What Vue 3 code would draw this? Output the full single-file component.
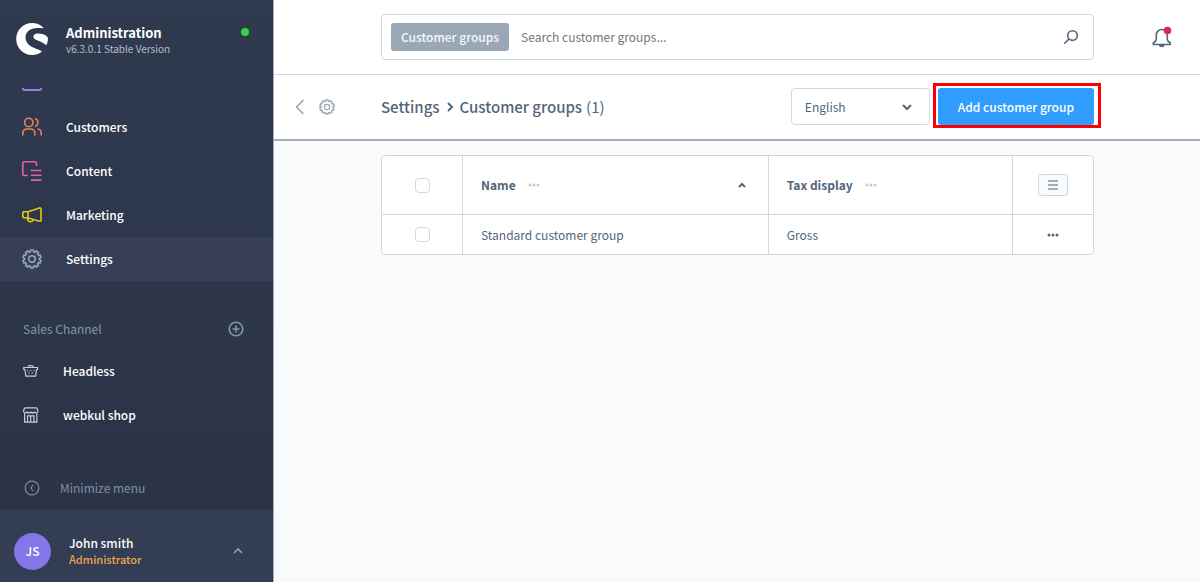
<template>
  <div class="admin">
    <aside class="sidebar">
      <header class="brand">
        <svg class="brand-logo" viewBox="0 0 32 32" aria-hidden="true">
          <path fill="#fff" d="M27 4.300C24 1.500 20.500 0 16.200 0C7.200 0 0.200 7.200 0.200 16S7.200 32 16.200 32c3.500 0 6.700-1.100 9.300-3c0.300-0.300 0.200-0.700-0.100-0.900C22.500 25.900 9.500 24.300 9.500 14.300C9.500 8.600 14.600 5.200 21 5c2.200-0.100 4.200 0.100 5.800 0.300c0.500 0 0.700-0.600 0.200-1z" />
          <path fill="#fff" d="M31.700 14.200C28.800 11.400 25.600 10.600 21.600 10.600c-2.700 0-4.200 1.300-4.200 3.100c0 3.700 7.500 3.700 12.100 8c0.500 0.500 1 0.300 1.200-0.200C31.700 19.500 32.200 16.800 31.700 14.200z" />
        </svg>
        <div class="brand-text">
          <strong>Administration</strong>
          <span>v6.3.0.1 Stable Version</span>
        </div>
        <i class="online"></i>
      </header>

      <div class="scrolled-icon">
        <svg width="20" height="4" viewBox="0 0 20 4" aria-hidden="true">
          <path d="M1 0v.5q0 1.500 1.500 1.500h15q1.500 0 1.500-1.500V0" fill="none" stroke="#9083e0" stroke-width="2" />
        </svg>
      </div>

      <nav class="menu">
        <a
          v-for="item in menu"
          :key="item.name"
          href="#"
          class="menu-item"
          :class="['menu-' + item.name, { active: item.name === 'settings' }]"
        >
          <svg class="icon" viewBox="0 0 20 20" aria-hidden="true">
            <path v-for="d in item.paths" :key="d" :d="d" />
          </svg>
          <span>{{ item.label }}</span>
        </a>
      </nav>

      <section class="channels">
        <div class="channels-head">
          <h2>Sales Channel</h2>
          <button type="button" aria-label="Add sales channel">
            <svg width="16" height="16" viewBox="0 0 16 16" aria-hidden="true">
              <circle cx="8" cy="8" r="6.800" />
              <path d="M8 4.500v7M4.500 8h7" />
            </svg>
          </button>
        </div>
        <a href="#" class="channel">
          <svg width="16" height="16" viewBox="0 0 16 16" aria-hidden="true">
            <path d="M.8 4.500h13.800v2h-1L12.600 13.200H2.900L1.800 6.500h-1zM5 4.500q.3-1.900 2-1.900h1.500q1.700 0 2 1.900" />
            <path d="M4 7.500h1.200M7.200 7.500h1.200M10.300 7.500h1.200M5.500 9.800h1.200M8.700 9.800h1.200" />
          </svg>
          <span>Headless</span>
        </a>
        <a href="#" class="channel">
          <svg width="16" height="16" viewBox="0 0 16 16" aria-hidden="true">
            <path d="M2 .8h11.500l1.200 2V5q-1.500 2-3 0q-2 2-4 0q-2 2-4 0q-1.500 2-3 0V2.800zM1.600 6.500v8.700h12.300V6.500M4.500 15V8.800h6.500V15M7.700 8.800V15" />
          </svg>
          <span>webkul shop</span>
        </a>
      </section>

      <button type="button" class="minimize">
        <svg width="16" height="16" viewBox="0 0 16 16" aria-hidden="true">
          <circle cx="8" cy="8" r="6.900" />
          <path d="M9 5L7 8l2 3" />
        </svg>
        <span>Minimize menu</span>
      </button>

      <button type="button" class="user">
        <span class="avatar">JS</span>
        <span class="user-text">
          <strong>John smith</strong>
          <em>Administrator</em>
        </span>
        <svg width="10" height="10" viewBox="0 0 10 10" aria-hidden="true">
          <path d="M1 7l4-4 4 4" />
        </svg>
      </button>
    </aside>

    <main class="page">
      <div class="topbar">
        <form class="search" @submit.prevent>
          <span class="tag">Customer groups</span>
          <input v-model="term" type="text" placeholder="Search customer groups..." aria-label="Search customer groups" />
          <button type="submit" aria-label="Search">
            <svg width="16" height="16" viewBox="0 0 16 16" aria-hidden="true">
              <circle cx="9.500" cy="6.500" r="4.800" />
              <path d="M6 10l-4.800 4.800" />
            </svg>
          </button>
        </form>
        <button type="button" class="bell" aria-label="Notifications">
          <svg width="20" height="22" viewBox="0 0 20 22" aria-hidden="true">
            <path d="M4.300 9a5.500 5.500 0 0 1 11 0v4.500q0 1.500 3 3.500v1.500H1.300V17q3-2 3-3.500z" stroke-linejoin="round" />
            <path d="M7 19h5.500a2.750 2.200 0 0 1-5.500 0z" fill="#5a6b7d" stroke="none" />
            <circle cx="15.500" cy="4.500" r="3.800" fill="#de294c" stroke="none" />
          </svg>
        </button>
      </div>

      <div class="smartbar">
        <div class="back">
          <a href="#" aria-label="Back">
            <svg width="10" height="16" viewBox="0 0 10 16" aria-hidden="true">
              <path d="M8.500 1L1.500 8l7 7" />
            </svg>
          </a>
          <svg width="16" height="16" viewBox="0 0 20 20" aria-hidden="true">
            <path v-for="d in gear" :key="d" :d="d" />
          </svg>
        </div>
        <h1>
          <a href="#">Settings</a>
          <svg width="8" height="10" viewBox="0 0 8 10" aria-hidden="true">
            <path d="M2 1l4 4-4 4" />
          </svg>
          Customer groups <small>(1)</small>
        </h1>
        <div class="language">
          <select v-model="language" aria-label="Language">
            <option>English</option>
          </select>
          <svg width="10" height="10" viewBox="0 0 10 10" aria-hidden="true">
            <path d="M1 3l4 4 4-4" />
          </svg>
        </div>
        <button type="button" class="primary">Add customer group</button>
      </div>

      <div class="content">
        <div class="card">
          <table>
            <colgroup>
              <col class="col-check" />
              <col class="col-name" />
              <col />
              <col class="col-actions" />
            </colgroup>
            <thead>
              <tr>
                <th><input type="checkbox" aria-label="Select all" /></th>
                <th>
                  <div class="head">
                    Name
                    <svg class="dots" width="12" height="4" viewBox="0 0 12 4" aria-hidden="true">
                      <path :d="dots" />
                    </svg>
                    <svg class="sort" width="8" height="8" viewBox="0 0 8 8" aria-hidden="true">
                      <path d="M1 6l3-3 3 3" />
                    </svg>
                  </div>
                </th>
                <th>
                  <div class="head">
                    Tax display
                    <svg class="dots" width="12" height="4" viewBox="0 0 12 4" aria-hidden="true">
                      <path :d="dots" />
                    </svg>
                  </div>
                </th>
                <th>
                  <button type="button" class="columns" aria-label="Table settings">
                    <svg width="12" height="12" viewBox="0 0 12 12" aria-hidden="true">
                      <path d="M1 2h10M1 6h10M1 10h10" />
                    </svg>
                  </button>
                </th>
              </tr>
            </thead>
            <tbody>
              <tr v-for="group in groups" :key="group.name">
                <td><input type="checkbox" :aria-label="`Select ${group.name}`" /></td>
                <td>{{ group.name }}</td>
                <td>{{ group.tax }}</td>
                <td>
                  <button type="button" class="more" aria-label="Actions">
                    <svg width="12" height="4" viewBox="0 0 12 4" aria-hidden="true">
                      <path :d="dots" />
                    </svg>
                  </button>
                </td>
              </tr>
            </tbody>
          </table>
        </div>
      </div>
    </main>
  </div>
</template>

<script setup>
import { ref } from 'vue'

const term = ref('')
const language = ref('English')

const dots = 'M2 2h.01M6 2h.01M10 2h.01'

// outline with ten teeth around the hub
function gearOutline() {
  const teeth = 10
  const points = []
  for (let i = 0; i < teeth; i++) {
    const base = (i / teeth) * Math.PI * 2 - Math.PI / 2
    for (const [offset, radius] of [[-0.21, 7.4], [-0.15, 9.1], [0.15, 9.1], [0.21, 7.4]]) {
      const x = 10 + radius * Math.cos(base + offset)
      const y = 10 + radius * Math.sin(base + offset)
      points.push(`${x.toFixed(2)} ${y.toFixed(2)}`)
    }
  }
  return `M${points.join('L')}Z`
}

const gear = [gearOutline(), 'M13.300 10a3.300 3.300 0 1 1-6.600 0a3.300 3.300 0 0 1 6.600 0z']

const menu = [
  {
    name: 'customers',
    label: 'Customers',
    paths: [
      'M11 5.500a4.200 4.200 0 1 1-8.400 0a4.200 4.200 0 0 1 8.400 0z',
      'M.8 18.500v-2.500a4 4 0 0 1 4-4h4a4 4 0 0 1 4 4V18.500',
      'M13 1.500a4.200 4.200 0 0 1 0 8',
      'M15.500 12a4 4 0 0 1 3.700 4V18.500'
    ]
  },
  {
    name: 'content',
    label: 'Content',
    paths: ['M6 14.500H2.500a1.700 1.700 0 0 1-1.700-1.700V2.500A1.700 1.700 0 0 1 2.500.8h10.300a1.700 1.700 0 0 1 1.700 1.700V5', 'M8.500 9.500h11M9 14.300h10.500M9 19.100h10.500']
  },
  {
    name: 'marketing',
    label: 'Marketing',
    paths: ['M6 6.700L17.500 3q1.500-.4 1.500 1v11.200q0 1.400-1.500 1L6 12.900z', 'M6 6.700H1.500L.8 8v3.500l.7 1.300H6', 'M5.500 13v1a3 3 0 0 0 5.700 1']
  },
  { name: 'settings', label: 'Settings', paths: gear }
]

const groups = [{ name: 'Standard customer group', tax: 'Gross' }]
</script>

<style>
body {
  margin: 0;
}
</style>

<style scoped>
.admin {
  display: flex;
  min-height: 100vh;
  background: #f9fafb;
  color: #52667a;
  font-family: "Noto Sans CJK SC", "Noto Sans", sans-serif;
  font-size: 12px;
  line-height: 16px;
}

.admin *,
.admin *::after {
  box-sizing: border-box;
}

a {
  color: inherit;
  text-decoration: none;
}

button {
  padding: 0;
  border: 0;
  background: none;
  color: inherit;
  font: inherit;
  cursor: pointer;
}

svg {
  display: block;
  flex: none;
  fill: none;
  stroke: currentColor;
  stroke-width: 1.6;
}

.sidebar {
  display: flex;
  flex: none;
  flex-direction: column;
  width: 273px;
  background: linear-gradient(#303a4f, #2a3345);
  color: #fff;
}

.brand {
  display: flex;
  align-items: center;
  height: 76px;
  padding: 2px 24px 0 16px;
}

.brand-logo {
  width: 32px;
  height: 32px;
  stroke: none;
}

.brand-text {
  display: flex;
  flex: 1;
  flex-direction: column;
  margin: 4px 0 0 18px;
}

.brand-text strong {
  font-size: 13px;
  font-weight: 700;
}

.brand-text span {
  color: #b4bcc8;
  font-size: 10px;
}

.online {
  width: 8px;
  height: 8px;
  margin-bottom: 14px;
  border-radius: 50%;
  background: #37d046;
}

.scrolled-icon {
  height: 29px;
  padding: 12px 22px 0;
}

.menu-item {
  display: flex;
  align-items: center;
  gap: 24px;
  height: 44px;
  padding: 0 22px;
  font-weight: 500;
}

.menu-item.active {
  background: #363f57;
}

.icon {
  width: 20px;
  height: 20px;
}

.menu-customers .icon {
  color: #e57f5f;
}

.menu-content .icon {
  color: #e55fa5;
}

.menu-marketing .icon {
  color: #e6c910;
}

.menu-settings .icon {
  color: #94a4b5;
}

.channels {
  padding: 32px 29px 0 23px;
}

.channels-head {
  display: flex;
  align-items: center;
  justify-content: space-between;
  height: 32px;
  margin-bottom: 4px;
  color: #8495a8;
}

.channels-head h2 {
  margin: 0;
  font-size: 12px;
  font-weight: 400;
}

.channel {
  display: flex;
  align-items: center;
  gap: 24px;
  height: 44px;
  font-weight: 500;
}

.channel svg {
  color: #c5cdd7;
  stroke-width: 1.2;
}

.minimize {
  display: flex;
  align-items: center;
  gap: 20px;
  height: 45px;
  margin-top: auto;
  padding: 0 24px;
  color: #8090a2;
}

.minimize svg {
  stroke-width: 1.2;
}

.user {
  display: flex;
  align-items: center;
  height: 72px;
  padding: 10px 30px 0 14px;
  background: #333d53;
  text-align: left;
}

.avatar {
  width: 37px;
  height: 37px;
  border-radius: 50%;
  background: #8475e8;
  font-weight: 500;
  line-height: 36px;
  text-align: center;
}

.user-text {
  display: flex;
  flex: 1;
  flex-direction: column;
  margin-left: 18px;
}

.user-text strong {
  font-weight: 500;
}

.user-text em {
  color: #eda64e;
  font-size: 11px;
  font-style: normal;
  font-weight: 500;
}

.user svg {
  color: #94a4b5;
}

.page {
  flex: 1;
  min-width: 0;
  border-left: 1px solid #a4aebb;
}

.topbar {
  display: flex;
  align-items: center;
  height: 75px;
  padding: 0 28px 0 107px;
  border-bottom: 1px solid #d1d9e0;
  background: #fff;
}

.search {
  display: flex;
  flex: 1;
  align-items: center;
  height: 46px;
  padding: 0 14px 0 9px;
  border: 1px solid #d1d9e0;
  border-radius: 4px;
}

.tag {
  height: 28px;
  padding: 0 10px;
  border-radius: 3px;
  background: #9aa8b5;
  color: #f5f7f9;
  font-weight: 500;
  line-height: 28px;
}

.search input {
  flex: 1;
  min-width: 0;
  margin-left: 12px;
  padding: 0;
  border: 0;
  outline: 0;
  background: none;
  color: #52667a;
  font: inherit;
}

.search input::placeholder {
  color: #757575;
}

.bell {
  margin-left: 58px;
}

.smartbar {
  display: flex;
  align-items: center;
  height: 66px;
  padding: 0 106px 1px 0;
  border-bottom: 2px solid #a1adba;
  background: #fff;
}

.back {
  display: flex;
  flex: none;
  align-items: center;
  gap: 14px;
  width: 107px;
  padding-left: 21px;
  color: #98a7b7;
}

h1 {
  display: flex;
  flex: 1;
  align-items: center;
  margin: 0;
  font-size: 15px;
  font-weight: 500;
}

h1 svg {
  margin: 0 6px;
  stroke-width: 2;
}

h1 small {
  margin-left: 4px;
  font-size: 15px;
  font-weight: 400;
}

.language {
  display: flex;
  align-items: center;
  width: 139px;
  margin-right: 8px;
  padding-right: 17px;
  border: 1px solid #d1d9e0;
  border-radius: 4px;
}

.language select {
  flex: 1;
  height: 35px;
  padding: 0 0 0 13px;
  border: 0;
  appearance: none;
  background: none;
  color: #52667a;
  font: inherit;
}

.language svg {
  stroke-width: 2;
}

.primary {
  position: relative;
  height: 37px;
  padding: 0 20px;
  border-radius: 3px;
  background: #319dff;
  color: #fff;
  font-weight: 500;
}

.primary::after {
  content: "";
  position: absolute;
  inset: -5px -7px -3px -5px;
  border: 3px solid #f00;
}

.content {
  padding: 14px 106px 14px 107px;
}

.card {
  overflow: hidden;
  border: 1px solid #d1d9e0;
  border-radius: 4px;
  background: #fff;
}

table {
  width: 100%;
  border-collapse: separate;
  border-spacing: 0;
  table-layout: fixed;
}

.col-check {
  width: 80px;
}

.col-name {
  width: 43%;
}

.col-actions {
  width: 81px;
}

th,
td {
  padding: 0 18px;
  text-align: left;
}

th {
  height: 59px;
  border-bottom: 1px solid #d1d9e0;
  font-weight: 700;
}

td {
  height: 39px;
}

th + th,
td + td {
  border-left: 1px solid #d1d9e0;
}

th:first-child,
td:first-child,
th:last-child,
td:last-child {
  text-align: center;
}

.head {
  display: flex;
  align-items: center;
}

.dots {
  margin-left: 12px;
  color: #c3cdd7;
}

.dots,
.more svg {
  stroke-width: 3;
  stroke-linecap: round;
}

.sort {
  margin-left: auto;
  margin-right: 4px;
  stroke-width: 2;
}

input[type="checkbox"] {
  display: block;
  width: 15px;
  height: 15px;
  margin: 0 auto;
  border: 1px solid #d1d9e0;
  border-radius: 4px;
  appearance: none;
  background: #fff;
}

.columns {
  display: block;
  margin: 0 auto;
  padding: 4px 8px;
  border: 1px solid #d1d9e0;
  border-radius: 3px;
  background: #f9fafb;
  color: #8496a8;
}

.more {
  display: block;
  margin: 0 auto;
  padding: 6px;
}
</style>
